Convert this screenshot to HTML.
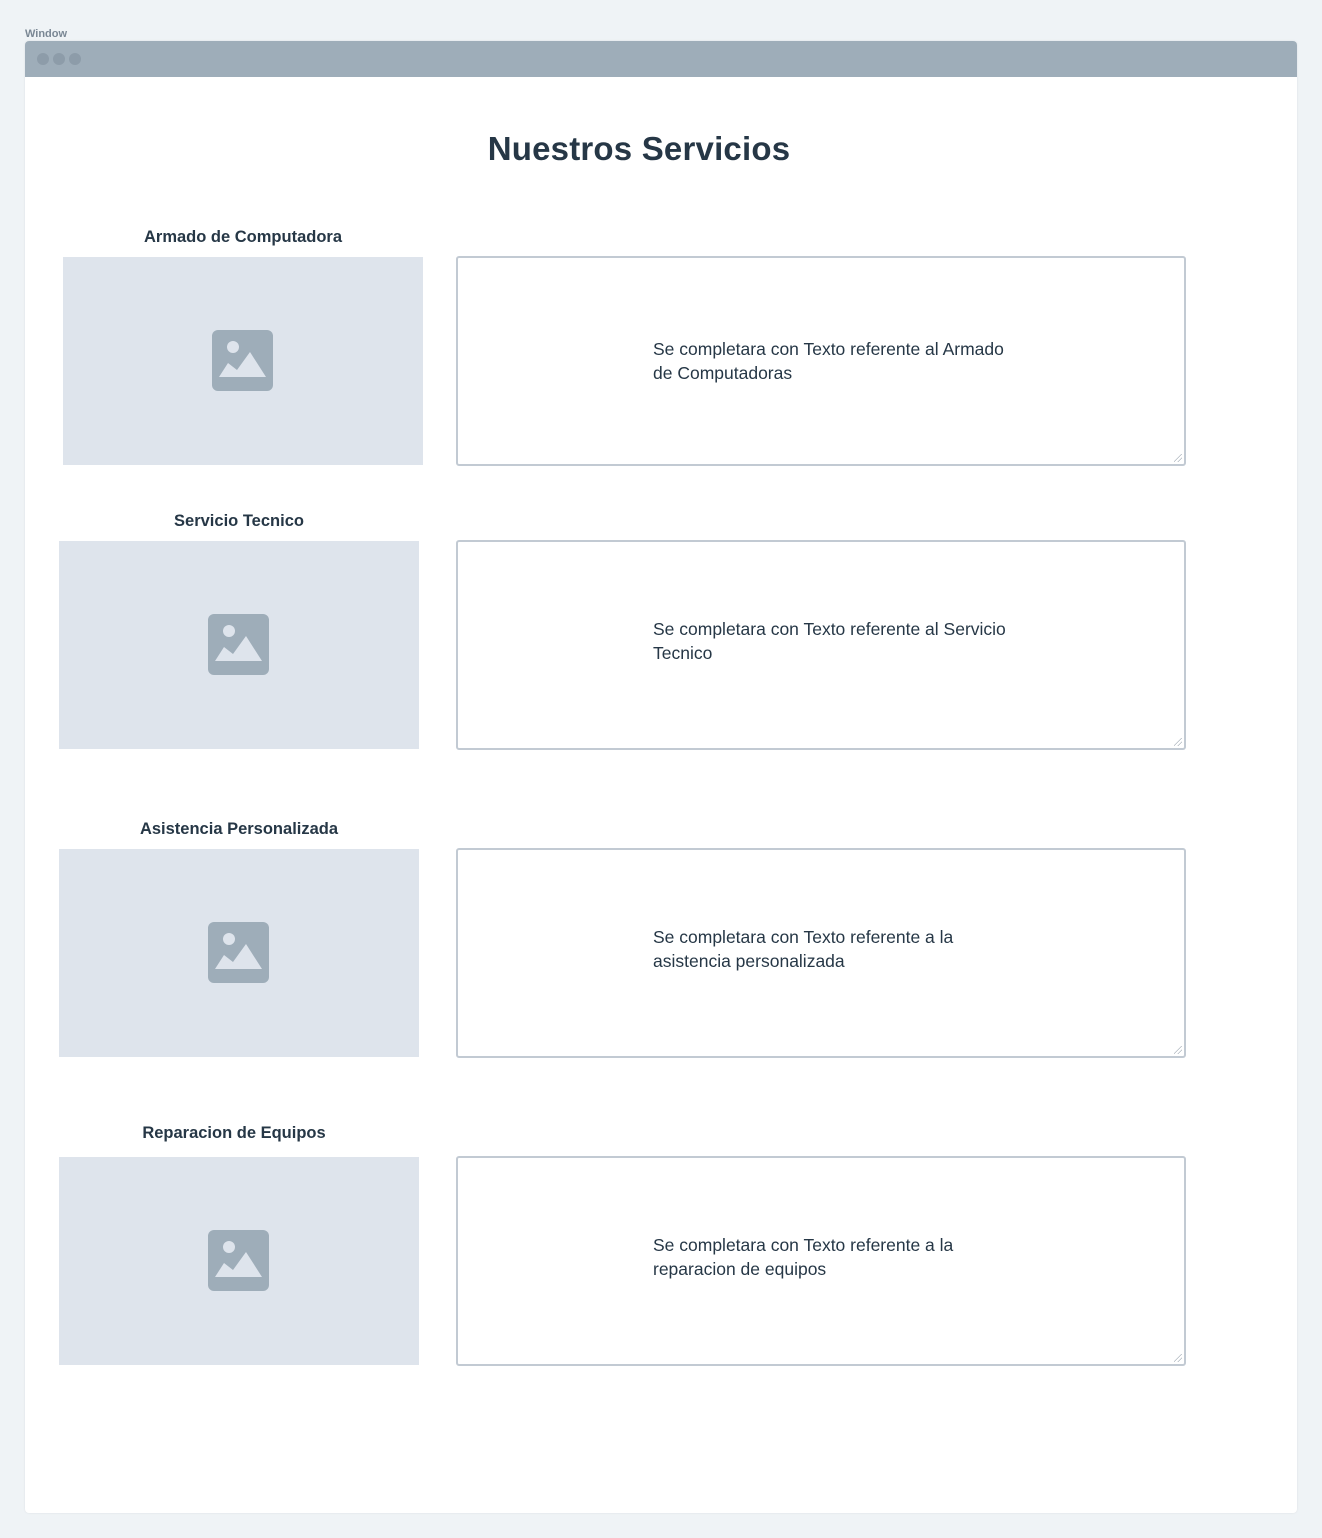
<!DOCTYPE html>
<html><head><style>
body{margin:0;width:1322px;height:1538px;background:#eff3f6;font-family:"Liberation Sans",sans-serif;position:relative;overflow:hidden}
.lbl{position:absolute;left:25px;top:28px;font-size:11px;font-weight:bold;color:#7a8794}
.win{position:absolute;left:25px;top:41px;width:1272px;height:1472px;background:#fff;border-radius:4px;box-shadow:0 0 2px rgba(0,0,0,.08)}
.bar{height:36px;background:#9eadb9;border-radius:4px 4px 0 0;position:relative}
.dot{position:absolute;top:12px;width:12px;height:12px;border-radius:50%;background:#8d9ca9}
h1{position:absolute;left:0;width:1278px;text-align:center;top:130px;margin:0;font-size:33px;font-weight:bold;color:#263746;letter-spacing:0.2px}
.t{position:absolute;font-size:16.5px;font-weight:bold;color:#263746;text-align:center;width:360px}
.img{position:absolute;width:360px;height:208px;background:#dee4ec}
.img svg{position:absolute;left:149px;top:73px}
.box{position:absolute;left:456px;width:726px;height:206px;border:2px solid #c2cad3;border-radius:3px;background:#fff}
.box p{position:absolute;left:195px;margin:0;font-size:17.5px;line-height:24px;color:#263746;width:360px}
.rz{position:absolute;right:2px;bottom:2px;width:8px;height:8px;background:linear-gradient(135deg,transparent 45%,#b0b8c0 45%,#b0b8c0 52%,transparent 52%,transparent 70%,#b0b8c0 70%,#b0b8c0 77%,transparent 77%)}
</style></head><body>
<div class="lbl">Window</div>
<div class="win"><div class="bar"><div class="dot" style="left:12px"></div><div class="dot" style="left:28px"></div><div class="dot" style="left:44px"></div></div></div>
<h1>Nuestros Servicios</h1>

<div class="t" style="left:63px;top:228px">Armado de Computadora</div>
<div class="img" style="left:63px;top:257px"><svg width="61" height="61"><rect width="61" height="61" rx="6" fill="#9eadb9"/><circle cx="21" cy="17" r="6" fill="#dee4ec"/><polygon points="7,47 16,33 25,40 38,22 54,47" fill="#dee4ec"/></svg></div>
<div class="box" style="top:256px"><p style="top:79px">Se completara con Texto referente al Armado de Computadoras</p><div class="rz"></div></div>

<div class="t" style="left:59px;top:512px">Servicio Tecnico</div>
<div class="img" style="left:59px;top:541px"><svg width="61" height="61"><rect width="61" height="61" rx="6" fill="#9eadb9"/><circle cx="21" cy="17" r="6" fill="#dee4ec"/><polygon points="7,47 16,33 25,40 38,22 54,47" fill="#dee4ec"/></svg></div>
<div class="box" style="top:540px"><p style="top:75px">Se completara con Texto referente al Servicio Tecnico</p><div class="rz"></div></div>

<div class="t" style="left:59px;top:820px">Asistencia Personalizada</div>
<div class="img" style="left:59px;top:849px"><svg width="61" height="61"><rect width="61" height="61" rx="6" fill="#9eadb9"/><circle cx="21" cy="17" r="6" fill="#dee4ec"/><polygon points="7,47 16,33 25,40 38,22 54,47" fill="#dee4ec"/></svg></div>
<div class="box" style="top:848px"><p style="top:75px">Se completara con Texto referente a la asistencia personalizada</p><div class="rz"></div></div>

<div class="t" style="left:54px;top:1124px">Reparacion de Equipos</div>
<div class="img" style="left:59px;top:1157px"><svg width="61" height="61"><rect width="61" height="61" rx="6" fill="#9eadb9"/><circle cx="21" cy="17" r="6" fill="#dee4ec"/><polygon points="7,47 16,33 25,40 38,22 54,47" fill="#dee4ec"/></svg></div>
<div class="box" style="top:1156px"><p style="top:75px">Se completara con Texto referente a la reparacion de equipos</p><div class="rz"></div></div>
</body></html>
